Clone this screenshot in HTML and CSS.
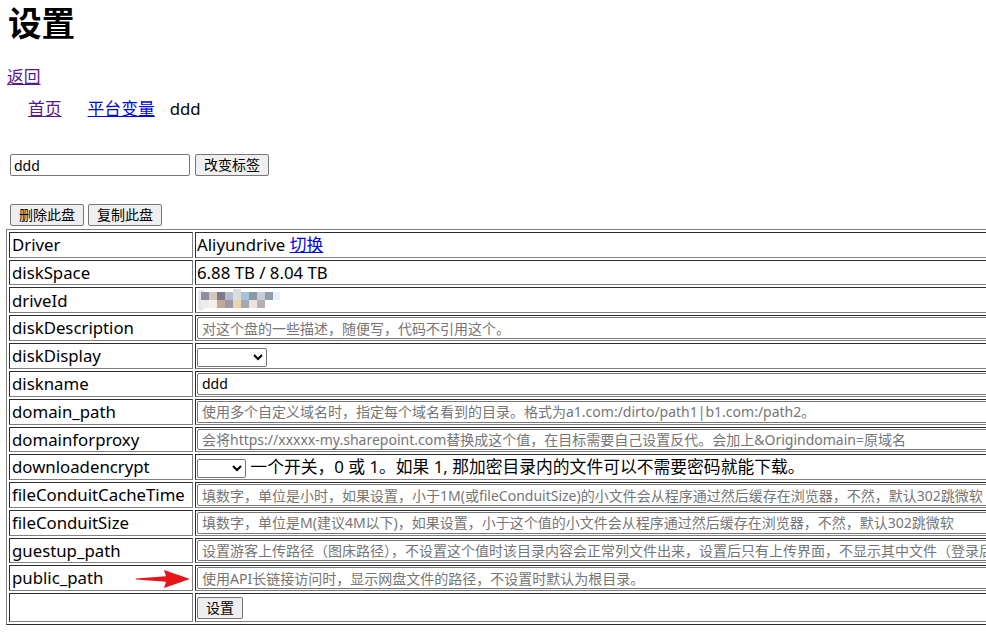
FILE: index.html
```html
<!DOCTYPE html>
<html lang="zh-CN">
<head>
  <meta charset="UTF-8" />
  <title>设置</title>
  <link rel="stylesheet" href="styles.css">
</head>
<body>

  <h1>设置</h1>

  <p class="back"><a href="#" class="visited">返回</a></p>

  <div class="crumbs">
    <a href="#" class="visited home">首页</a>
    <a href="#" class="vars">平台变量</a>
    <span>ddd</span>
  </div>

  <!-- 改标签 -->
  <form class="tag-form">
    <input type="text" class="tag-input" value="ddd" />
    <button type="button">改变标签</button>
  </form>

  <div class="disk-actions">
    <button type="button">删除此盘</button>
    <button type="button">复制此盘</button>
  </div>

  <div class="table-wrap">
  <table class="config">
    <tr>
      <td class="key">Driver</td>
      <td>Aliyundrive <a href="#">切换</a></td>
    </tr>
    <tr>
      <td class="key">diskSpace</td>
      <td>6.88 TB / 8.04 TB</td>
    </tr>
    <tr>
      <td class="key">driveId</td>
      <td>
        <!-- 打码 -->
        <svg class="mosaic" width="82" height="22" viewBox="0 0 82 22">
          <defs>
            <filter id="soft"><feGaussianBlur stdDeviation="0.6"/></filter>
          </defs>
          <g filter="url(#soft)">
            <rect x="0" y="1" width="6" height="20" fill="#e6e6e8"/>
            <rect x="3" y="3" width="8" height="8" fill="#8c8ca4"/>
            <rect x="11" y="3" width="8" height="8" fill="#d6c8b8"/>
            <rect x="19" y="3" width="8" height="8" fill="#7c7890"/>
            <rect x="27" y="3" width="8" height="8" fill="#b4bcc8"/>
            <rect x="35" y="0" width="8" height="11" fill="#dcdcdc"/>
            <rect x="43" y="3" width="8" height="8" fill="#a4c4dc"/>
            <rect x="51" y="3" width="8" height="8" fill="#8c98a8"/>
            <rect x="59" y="3" width="8" height="8" fill="#c8ccd4"/>
            <rect x="67" y="3" width="8" height="8" fill="#909cac"/>
            <rect x="75" y="3" width="7" height="8" fill="#e8eef4"/>
            <rect x="3" y="11" width="8" height="8" fill="#eceeee"/>
            <rect x="11" y="11" width="8" height="8" fill="#f4f0ec"/>
            <rect x="19" y="11" width="8" height="8" fill="#c4a898"/>
            <rect x="27" y="11" width="8" height="8" fill="#9c98a8"/>
            <rect x="35" y="11" width="8" height="8" fill="#ecd4b0"/>
            <rect x="43" y="11" width="8" height="8" fill="#a4a8b0"/>
            <rect x="51" y="11" width="8" height="8" fill="#ece4d8"/>
            <rect x="59" y="11" width="8" height="8" fill="#b8b0b0"/>
          </g>
        </svg>
      </td>
    </tr>
    <tr>
      <td class="key">diskDescription</td>
      <td><input type="text" class="wide" placeholder="对这个盘的一些描述，随便写，代码不引用这个。" /></td>
    </tr>
    <tr>
      <td class="key">diskDisplay</td>
      <td><select class="sel-long"><option></option></select></td>
    </tr>
    <tr>
      <td class="key">diskname</td>
      <td><input type="text" class="wide" value="ddd" /></td>
    </tr>
    <tr>
      <td class="key">domain_path</td>
      <td><input type="text" class="wide" placeholder="使用多个自定义域名时，指定每个域名看到的目录。格式为a1.com:/dirto/path1|b1.com:/path2。" /></td>
    </tr>
    <tr>
      <td class="key">domainforproxy</td>
      <td><input type="text" class="wide" placeholder="会将https://xxxxx-my.sharepoint.com替换成这个值，在目标需要自己设置反代。会加上&amp;Origindomain=原域名" /></td>
    </tr>
    <tr>
      <td class="key">downloadencrypt</td>
      <td><select class="sel-short"><option></option></select> 一个开关，0 或 1。如果 1, 那加密目录内的文件可以不需要密码就能下载。</td>
    </tr>
    <tr>
      <td class="key">fileConduitCacheTime</td>
      <td><input type="text" class="wide" placeholder="填数字，单位是小时，如果设置，小于1M(或fileConduitSize)的小文件会从程序通过然后缓存在浏览器，不然，默认302跳微软" /></td>
    </tr>
    <tr>
      <td class="key">fileConduitSize</td>
      <td><input type="text" class="wide" placeholder="填数字，单位是M(建议4M以下)，如果设置，小于这个值的小文件会从程序通过然后缓存在浏览器，不然，默认302跳微软" /></td>
    </tr>
    <tr>
      <td class="key">guestup_path</td>
      <td><input type="text" class="wide" placeholder="设置游客上传路径（图床路径），不设置这个值时该目录内容会正常列文件出来，设置后只有上传界面，不显示其中文件（登录后显示）。" /></td>
    </tr>
    <tr>
      <td class="key arrow-cell">public_path
        <svg class="arrow" width="56" height="20" viewBox="0 0 56 20">
          <polygon points="0,9.4 30,7.2 28,1 54,10 28,19 30,12.8 0,10.6" fill="#e8141c"/>
        </svg>
      </td>
      <td><input type="text" class="wide" placeholder="使用API长链接访问时，显示网盘文件的路径，不设置时默认为根目录。" /></td>
    </tr>
    <tr>
      <td class="key"></td>
      <td><button type="button" class="submit">设置</button></td>
    </tr>
  </table>
  </div>

</body>
</html>
```

FILE: styles.css
```css
body {
  margin: 0;
  padding: 0 8px;
  font-family: "Noto Sans", "Noto Sans CJK SC", sans-serif;
  font-size: 16.8px;
  color: #000;
  background: #fff;
}

h1 {
  margin: 0;
  font-size: 33.6px;
  line-height: 46px;
  font-weight: bold;
}

a {
  color: #0000ee;
}

a.visited {
  color: #551a8b;
}

.back {
  margin: 20px 0 0 -1px;
  line-height: 22px;
}

.crumbs {
  margin-top: 10px;
  padding-left: 20px;
  line-height: 22px;
  display: flex;
}

.crumbs .home {
  margin-right: 26px;
}

.crumbs .vars {
  margin-right: 15px;
}

input,
button,
select {
  font-family: "Noto Sans", "Noto Sans CJK SC", sans-serif;
  font-size: 14px;
  margin: 0;
}

button {
  height: 22px;
  padding: 0 8px;
  background: #efefef;
  border: 1px solid #767676;
  border-radius: 2px;
  color: #000;
  line-height: 18px;
}

.tag-form {
  margin: 34px 0 0 2px;
  display: flex;
  gap: 5px;
}

.tag-input {
  width: 180px;
  height: 22px;
  box-sizing: border-box;
  padding: 0 3px;
  border: 1px solid #767676;
  border-radius: 2px;
}

.disk-actions {
  margin: 28px 0 0 2px;
  display: flex;
  gap: 4px;
}

/* 表格比窗口宽，右边裁掉 */
.table-wrap {
  margin: 3px -8px 0 -2px;
  overflow: hidden;
}

.config {
  border: 1px outset #808080;
  border-spacing: 2px;
  width: 1300px;
}

.config td {
  border: 1px inset #808080;
  padding: 1px;
  height: 21.7px;
  line-height: 21.7px;
  white-space: nowrap;
  vertical-align: middle;
}

.config td.key {
  width: 179px;
  padding-left: 2px;
}

.wide {
  width: 100%;
  height: 21.7px;
  box-sizing: border-box;
  padding: 0 4px;
  border: 1px solid #767676;
  border-radius: 2px;
  display: block;
}

.wide::placeholder {
  color: #757575;
}

select {
  height: 19px;
  border: 1px solid #767676;
  border-radius: 2px;
  background: #fff;
  vertical-align: middle;
  font-size: 13px;
}

.sel-long {
  width: 70px;
}

.sel-short {
  width: 49px;
}

.mosaic {
  display: block;
  margin-left: 1px;
}

.arrow-cell {
  position: relative;
}

.arrow {
  position: absolute;
  left: 126px;
  top: 3px;
}

.submit {
  margin: 1.5px 0;
  height: 22px;
  padding: 0 8px;
}
```
